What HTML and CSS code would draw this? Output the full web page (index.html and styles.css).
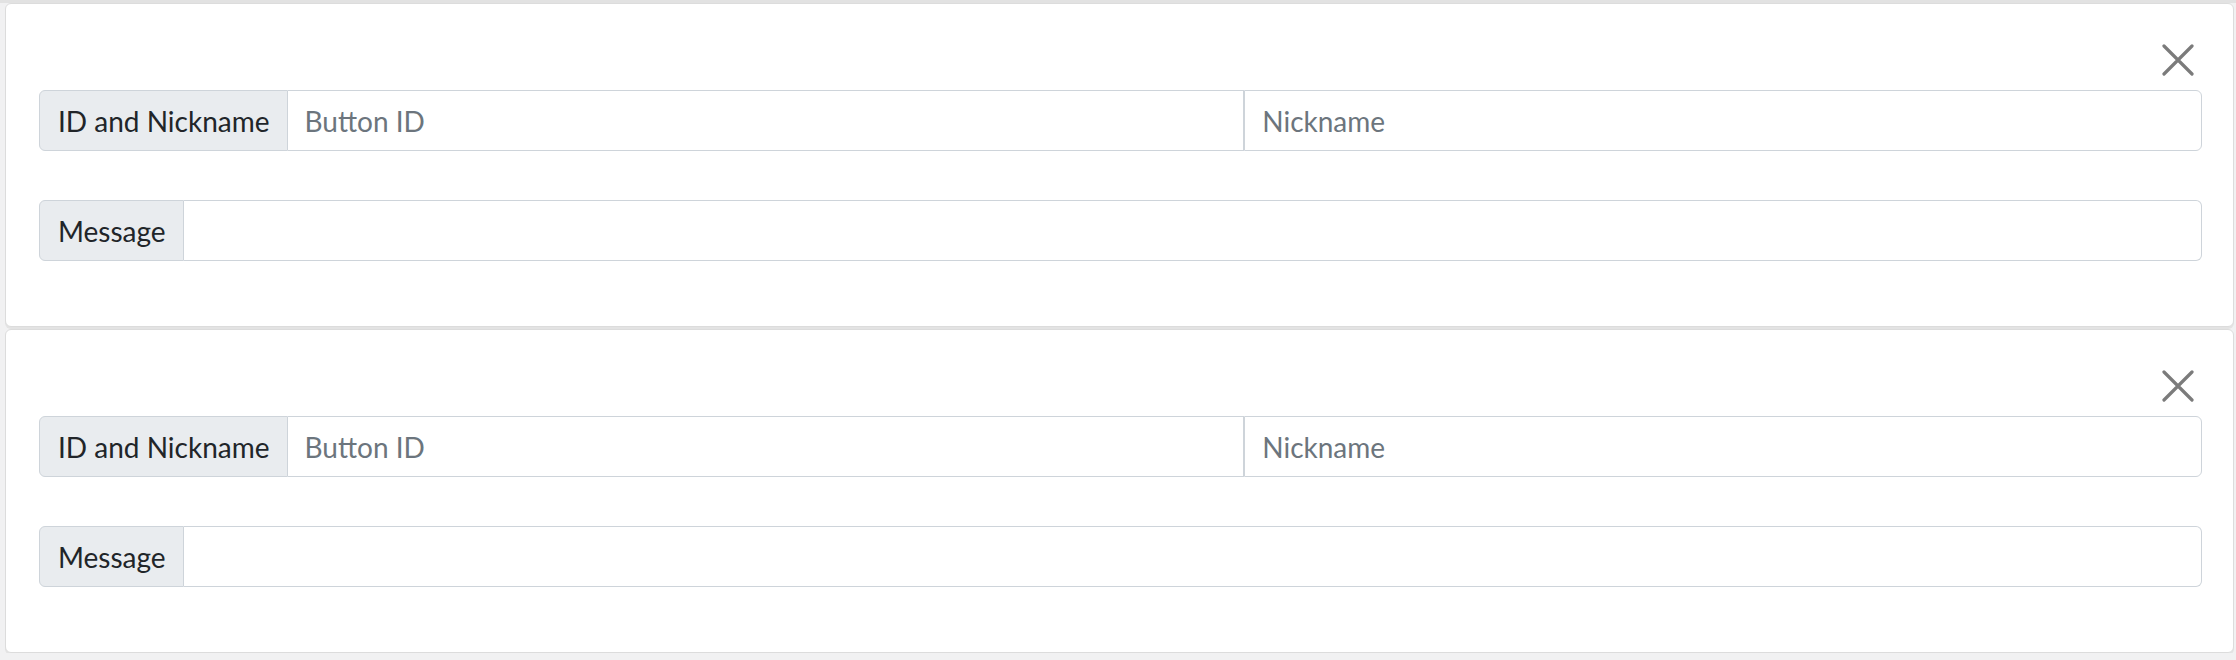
FILE: index.html
```html
<!DOCTYPE html>
<html lang="en">
<head>
<meta charset="utf-8">
<title>Buttons</title>
<link rel="stylesheet" href="styles.css">
</head>
<body>
<div class="list">
  <div class="card">
    <div class="card-head">
      <button class="close" type="button" aria-label="Close">
        <svg viewBox="0 0 32 32" width="32" height="32"><path d="M2 2L30 30M30 2L2 30" stroke="#7b7b7b" stroke-width="3.2" stroke-linecap="round" fill="none"/></svg>
      </button>
    </div>
    <div class="group">
      <span class="label">ID and Nickname</span>
      <input class="field" type="text" placeholder="Button ID">
      <input class="field" type="text" placeholder="Nickname">
    </div>
    <div class="group group-msg">
      <span class="label">Message</span>
      <input class="field" type="text">
    </div>
  </div>
  <div class="card">
    <div class="card-head">
      <button class="close" type="button" aria-label="Close">
        <svg viewBox="0 0 32 32" width="32" height="32"><path d="M2 2L30 30M30 2L2 30" stroke="#7b7b7b" stroke-width="3.2" stroke-linecap="round" fill="none"/></svg>
      </button>
    </div>
    <div class="group">
      <span class="label">ID and Nickname</span>
      <input class="field" type="text" placeholder="Button ID">
      <input class="field" type="text" placeholder="Nickname">
    </div>
    <div class="group group-msg">
      <span class="label">Message</span>
      <input class="field" type="text">
    </div>
  </div>
</div>
</body>
</html>
```

FILE: styles.css
```css
html, body {
  margin: 0;
  padding: 0;
}
body {
  background: #f1f1f2;
  font-family: "Lato", "Noto Sans", sans-serif;
  color: #212529;
}
.list {
  display: flex;
  flex-direction: column;
  gap: 2px;
  padding: 3px 2px 0 5px;
  background: linear-gradient(#e2e2e2, #e2e2e2) top / 100% 3px no-repeat;
}
.card {
  background: #fff;
  border: 1px solid #dcdcdc;
  border-radius: 6px;
  padding: 40px 31px 65px 33px;
  box-shadow: 0 2px 0 #e3e3e3;
}
.card-head {
  display: flex;
  justify-content: flex-end;
  padding-right: 8px;
}
.close {
  width: 32px;
  height: 32px;
  padding: 0;
  border: 0;
  background: transparent;
  display: block;
}
.close svg {
  display: block;
}
.group {
  display: flex;
  margin-top: 14px;
  height: 61px;
}
.group-msg {
  margin-top: 49px;
}
.label {
  display: flex;
  align-items: center;
  padding: 0 17px 0 18px;
  background: #e9ecef;
  border: 1px solid #ced4da;
  border-radius: 6px 0 0 6px;
  font-size: 28px;
  white-space: nowrap;
}
.field {
  flex: 1 1 0;
  min-width: 0;
  border: 1px solid #ced4da;
  border-left: 0;
  background: #fff;
  padding: 0 17px;
  font-family: inherit;
  font-size: 28px;
  color: #212529;
  outline: none;
}
.field::placeholder {
  color: #6c757d;
}
.field:last-child {
  border-radius: 0 6px 6px 0;
}
.field + .field {
  border-left: 1px solid #ced4da;
}
```
